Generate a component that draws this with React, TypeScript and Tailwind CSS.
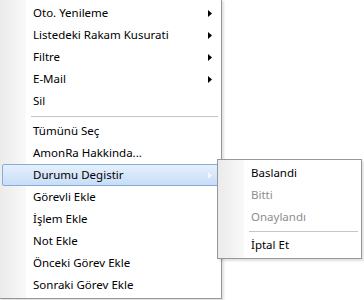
import { ReactNode } from 'react'

type Item =
  | { kind: 'item'; label: string; sub?: boolean; disabled?: boolean; active?: boolean }
  | { kind: 'sep'; tall?: boolean }

const mainItems: Item[] = [
  { kind: 'item', label: 'Oto. Yenileme', sub: true },
  { kind: 'item', label: 'Listedeki Rakam Kusurati', sub: true },
  { kind: 'item', label: 'Filtre', sub: true },
  { kind: 'item', label: 'E-Mail', sub: true },
  { kind: 'item', label: 'Sil' },
  { kind: 'sep', tall: true },
  { kind: 'item', label: 'Tümünü Seç' },
  { kind: 'item', label: 'AmonRa Hakkinda...' },
  { kind: 'item', label: 'Durumu Degistir', sub: true, active: true },
  { kind: 'item', label: 'Görevli Ekle' },
  { kind: 'item', label: 'İşlem Ekle' },
  { kind: 'item', label: 'Not Ekle' },
  { kind: 'item', label: 'Önceki Görev Ekle' },
  { kind: 'item', label: 'Sonraki Görev Ekle' },
]

const subItems: Item[] = [
  { kind: 'item', label: 'Baslandi' },
  { kind: 'item', label: 'Bitti', disabled: true },
  { kind: 'item', label: 'Onaylandı', disabled: true },
  { kind: 'sep' },
  { kind: 'item', label: 'İptal Et' },
]

function Arrow({ light }: { light?: boolean }) {
  return (
    <svg width="4" height="7" viewBox="0 0 4 7" className="shrink-0">
      <path d="M0 0 L4 3.5 L0 7 Z" fill={light ? '#f4f8fd' : '#000'} />
    </svg>
  )
}

function MenuList({ items }: { items: Item[] }) {
  return (
    <div className="flex flex-col">
      {items.map((it, i) => {
        if (it.kind === 'sep') {
          return (
            <div
              key={i}
              className={`flex items-center pl-[31px] pr-[3px] ${it.tall ? 'h-[8px]' : 'h-[6px]'}`}
            >
              <div className="h-px w-full bg-[#c5c5c5]" />
            </div>
          )
        }
        const row: ReactNode = (
          <>
            <span className="flex-1">{it.label}</span>
            {it.sub && <Arrow light={it.active} />}
          </>
        )
        return it.active ? (
          <div
            key={i}
            className="mx-[2px] flex h-[22px] items-center rounded-[2px] border border-[#84acdd] bg-[linear-gradient(to_bottom,#e6f0fc,#c7ddf7)] pl-[30px] pr-[6px]"
          >
            {row}
          </div>
        ) : (
          <div
            key={i}
            className={`flex h-[22px] items-center pl-[33px] pr-[9px] ${
              it.disabled ? 'text-[#8d8d8d]' : 'text-black'
            }`}
          >
            {row}
          </div>
        )
      })}
    </div>
  )
}

export default function App() {
  return (
    <div className="relative h-[300px] w-[364px] overflow-hidden bg-white font-['Noto_Sans',sans-serif] text-[11.5px] leading-none">
      {/* main context menu */}
      <div className="absolute left-[-1px] top-[-1px] w-[223px] border border-[#979797] bg-[linear-gradient(to_right,#ebebeb,#f9f9f9_26px,#ffffff_26px)] py-[2px] shadow-[2px_2px_2px_rgba(0,0,0,0.12)]">
        <MenuList items={mainItems} />
      </div>

      {/* Durumu Degistir submenu */}
      <div className="absolute left-[217px] top-[159px] w-[145px] border border-[#979797] bg-[linear-gradient(to_right,#ebebeb,#f9f9f9_26px,#ffffff_26px)] py-[2px] shadow-[2px_2px_2px_rgba(0,0,0,0.12)]">
        <MenuList items={subItems} />
      </div>
    </div>
  )
}
